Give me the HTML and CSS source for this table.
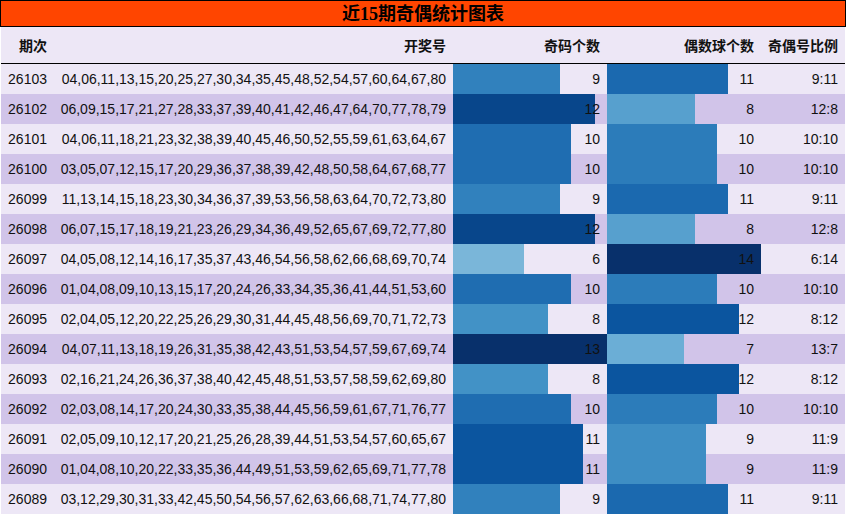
FILE: index.html
```html
<!DOCTYPE html>
<html lang="zh">
<head>
<meta charset="utf-8">
<title>近15期奇偶统计图表</title>
<link rel="stylesheet" href="styles.css">
</head>
<body>
<div class="title">近15期奇偶统计图表</div>
<div class="table">
  <div class="row head">
    <div class="c">期次</div>
    <div class="c">开奖号</div>
    <div class="c">奇码个数</div>
    <div class="c">偶数球个数</div>
    <div class="c">奇偶号比例</div>
  </div>
  <div class="row odd">
    <div class="c">26103</div><div class="c">04,06,11,13,15,20,25,27,30,34,35,45,48,52,54,57,60,64,67,80</div>
    <div class="c bar"><span class="fill" style="width:69.23%;background:#3181bd"></span><span class="num">9</span></div>
    <div class="c bar"><span class="fill" style="width:78.57%;background:#1b69af"></span><span class="num">11</span></div>
    <div class="c">9:11</div>
  </div>
  <div class="row even">
    <div class="c">26102</div><div class="c">06,09,15,17,21,27,28,33,37,39,40,41,42,46,47,64,70,77,78,79</div>
    <div class="c bar"><span class="fill" style="width:92.31%;background:#08468b"></span><span class="num">12</span></div>
    <div class="c bar"><span class="fill" style="width:57.14%;background:#57a0ce"></span><span class="num">8</span></div>
    <div class="c">12:8</div>
  </div>
  <div class="row odd">
    <div class="c">26101</div><div class="c">04,06,11,18,21,23,32,38,39,40,45,46,50,52,55,59,61,63,64,67</div>
    <div class="c bar"><span class="fill" style="width:76.92%;background:#1f6db1"></span><span class="num">10</span></div>
    <div class="c bar"><span class="fill" style="width:71.43%;background:#2c7cba"></span><span class="num">10</span></div>
    <div class="c">10:10</div>
  </div>
  <div class="row even">
    <div class="c">26100</div><div class="c">03,05,07,12,15,17,20,29,36,37,38,39,42,48,50,58,64,67,68,77</div>
    <div class="c bar"><span class="fill" style="width:76.92%;background:#1f6db1"></span><span class="num">10</span></div>
    <div class="c bar"><span class="fill" style="width:71.43%;background:#2c7cba"></span><span class="num">10</span></div>
    <div class="c">10:10</div>
  </div>
  <div class="row odd">
    <div class="c">26099</div><div class="c">11,13,14,15,18,23,30,34,36,37,39,53,56,58,63,64,70,72,73,80</div>
    <div class="c bar"><span class="fill" style="width:69.23%;background:#3181bd"></span><span class="num">9</span></div>
    <div class="c bar"><span class="fill" style="width:78.57%;background:#1b69af"></span><span class="num">11</span></div>
    <div class="c">9:11</div>
  </div>
  <div class="row even">
    <div class="c">26098</div><div class="c">06,07,15,17,18,19,21,23,26,29,34,36,49,52,65,67,69,72,77,80</div>
    <div class="c bar"><span class="fill" style="width:92.31%;background:#08468b"></span><span class="num">12</span></div>
    <div class="c bar"><span class="fill" style="width:57.14%;background:#57a0ce"></span><span class="num">8</span></div>
    <div class="c">12:8</div>
  </div>
  <div class="row odd">
    <div class="c">26097</div><div class="c">04,05,08,12,14,16,17,35,37,43,46,54,56,58,62,66,68,69,70,74</div>
    <div class="c bar"><span class="fill" style="width:46.15%;background:#7ab6d9"></span><span class="num">6</span></div>
    <div class="c bar"><span class="fill" style="width:100%;background:#08306b"></span><span class="num">14</span></div>
    <div class="c">6:14</div>
  </div>
  <div class="row even">
    <div class="c">26096</div><div class="c">01,04,08,09,10,13,15,17,20,24,26,33,34,35,36,41,44,51,53,60</div>
    <div class="c bar"><span class="fill" style="width:76.92%;background:#1f6db1"></span><span class="num">10</span></div>
    <div class="c bar"><span class="fill" style="width:71.43%;background:#2c7cba"></span><span class="num">10</span></div>
    <div class="c">10:10</div>
  </div>
  <div class="row odd">
    <div class="c">26095</div><div class="c">02,04,05,12,20,22,25,26,29,30,31,44,45,48,56,69,70,71,72,73</div>
    <div class="c bar"><span class="fill" style="width:61.54%;background:#4292c6"></span><span class="num">8</span></div>
    <div class="c bar"><span class="fill" style="width:85.71%;background:#0b559f"></span><span class="num">12</span></div>
    <div class="c">8:12</div>
  </div>
  <div class="row even">
    <div class="c">26094</div><div class="c">04,07,11,13,18,19,26,31,35,38,42,43,51,53,54,57,59,67,69,74</div>
    <div class="c bar"><span class="fill" style="width:100%;background:#08306b"></span><span class="num">13</span></div>
    <div class="c bar"><span class="fill" style="width:50%;background:#6baed6"></span><span class="num">7</span></div>
    <div class="c">13:7</div>
  </div>
  <div class="row odd">
    <div class="c">26093</div><div class="c">02,16,21,24,26,36,37,38,40,42,45,48,51,53,57,58,59,62,69,80</div>
    <div class="c bar"><span class="fill" style="width:61.54%;background:#4292c6"></span><span class="num">8</span></div>
    <div class="c bar"><span class="fill" style="width:85.71%;background:#0b559f"></span><span class="num">12</span></div>
    <div class="c">8:12</div>
  </div>
  <div class="row even">
    <div class="c">26092</div><div class="c">02,03,08,14,17,20,24,30,33,35,38,44,45,56,59,61,67,71,76,77</div>
    <div class="c bar"><span class="fill" style="width:76.92%;background:#1f6db1"></span><span class="num">10</span></div>
    <div class="c bar"><span class="fill" style="width:71.43%;background:#2c7cba"></span><span class="num">10</span></div>
    <div class="c">10:10</div>
  </div>
  <div class="row odd">
    <div class="c">26091</div><div class="c">02,05,09,10,12,17,20,21,25,26,28,39,44,51,53,54,57,60,65,67</div>
    <div class="c bar"><span class="fill" style="width:84.62%;background:#0b559f"></span><span class="num">11</span></div>
    <div class="c bar"><span class="fill" style="width:64.29%;background:#3e8ec4"></span><span class="num">9</span></div>
    <div class="c">11:9</div>
  </div>
  <div class="row even">
    <div class="c">26090</div><div class="c">01,04,08,10,20,22,33,35,36,44,49,51,53,59,62,65,69,71,77,78</div>
    <div class="c bar"><span class="fill" style="width:84.62%;background:#0b559f"></span><span class="num">11</span></div>
    <div class="c bar"><span class="fill" style="width:64.29%;background:#3e8ec4"></span><span class="num">9</span></div>
    <div class="c">11:9</div>
  </div>
  <div class="row odd">
    <div class="c">26089</div><div class="c">03,12,29,30,31,33,42,45,50,54,56,57,62,63,66,68,71,74,77,80</div>
    <div class="c bar"><span class="fill" style="width:69.23%;background:#3181bd"></span><span class="num">9</span></div>
    <div class="c bar"><span class="fill" style="width:78.57%;background:#1b69af"></span><span class="num">11</span></div>
    <div class="c">9:11</div>
  </div>
</div>
</body>
</html>
```
FILE: styles.css
```css
html, body {
  margin: 0;
  padding: 0;
  background: #ffffff;
}
body {
  width: 846px;
  font-family: "Liberation Sans", "Noto Sans CJK SC", sans-serif;
  font-size: 14px;
  color: #111111;
}
.title {
  box-sizing: border-box;
  height: 27px;
  width: 846px;
  border: 1px solid #000000;
  background: #ff4500;
  display: flex;
  align-items: center;
  justify-content: center;
  font-family: "Liberation Serif", "Noto Sans CJK SC", serif;
  font-weight: bold;
  font-size: 18px;
  line-height: 1;
  color: #000000;
}
.table {
  margin-left: 1px;
  width: 844px;
}
.row {
  display: grid;
  grid-template-columns: 53px 399px 154px 154px 84px;
  height: 30px;
}
.row.head {
  height: 36px;
  border-bottom: 1px solid #000000;
  background: #ede7f6;
  font-family: "Noto Sans CJK SC", "Liberation Sans", sans-serif;
  font-weight: bold;
}
.odd { background: #ede7f6; }
.even { background: #d1c4e9; }
.c {
  display: flex;
  align-items: center;
  justify-content: flex-end;
  padding-right: 7px;
  white-space: nowrap;
  min-width: 0;
}
.c.bar {
  display: grid;
  grid-template-columns: 100%;
  grid-template-rows: 100%;
  padding: 0;
  align-items: stretch;
  justify-items: start;
}
.fill {
  grid-area: 1 / 1;
  height: 100%;
}
.num {
  grid-area: 1 / 1;
  justify-self: end;
  align-self: center;
  padding-right: 7px;
  position: relative;
}
```
